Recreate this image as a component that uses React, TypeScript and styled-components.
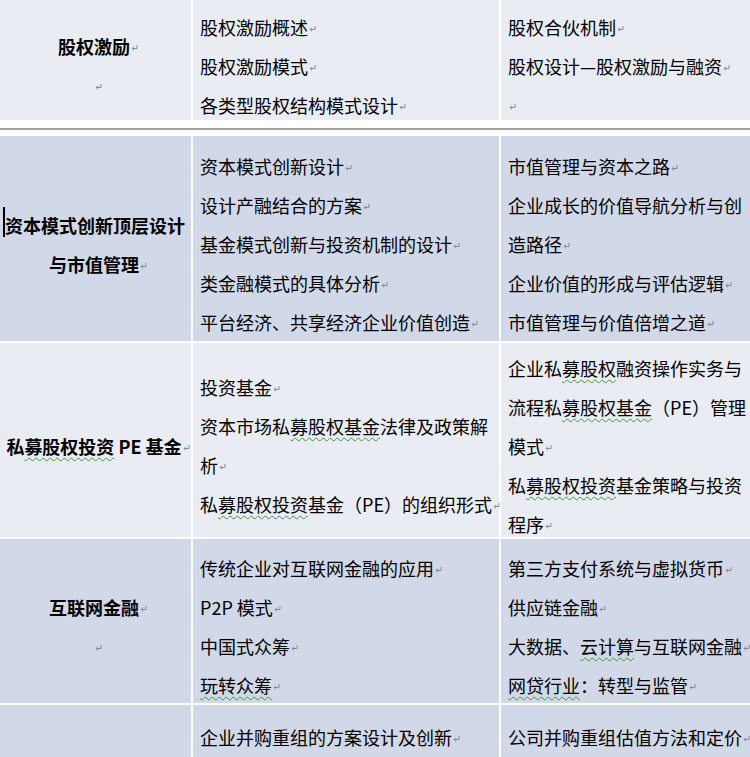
import React from "react";
import styled, { createGlobalStyle } from "styled-components";

const GlobalStyle = createGlobalStyle`
  html, body { margin: 0; padding: 0; background: #ffffff; overflow: hidden; }
  body { font-family: "Noto Sans CJK SC", "Noto Sans", sans-serif; }
`;

type Tone = "light" | "dark";
const toneBg: Record<Tone, string> = { light: "#e9ecf2", dark: "#d1d8e7" };

const Page = styled.div`
  width: 750px;
  height: 757px;
  overflow: hidden;
  display: flex;
  flex-direction: column;
  background: #ffffff;
`;

const Table = styled.div`
  display: flex;
  flex-direction: column;
  gap: 2px;
  width: 780px;
  flex-shrink: 0;
`;

const Row = styled.div<{ $h: number }>`
  display: grid;
  grid-template-columns: 191px 306px 1fr;
  column-gap: 2px;
  height: ${(p) => p.$h}px;
  flex-shrink: 0;
`;

const Cell = styled.div<{ $tone: Tone; $head?: boolean }>`
  background: ${(p) => toneBg[p.$tone]};
  display: flex;
  flex-direction: column;
  justify-content: center;
  padding: ${(p) => (p.$head ? "12px 4px 0 1px" : "12px 4px 0 7px")};
  text-align: ${(p) => (p.$head ? "center" : "left")};
  min-height: 0;
  overflow: visible;
`;

const Para = styled.p<{ $head?: boolean }>`
  margin: 0;
  font-size: 18px;
  line-height: 39px;
  white-space: nowrap;
  color: #000000;
  font-weight: ${(p) => (p.$head ? 700 : 400)};
`;

const Wavy = styled.span`
  text-decoration-line: underline;
  text-decoration-style: wavy;
  text-decoration-color: #3a9a3a;
  text-decoration-thickness: 1px;
  text-underline-offset: 3px;
  text-decoration-skip-ink: none;
`;

const Caret = styled.span`
  display: inline-block;
  width: 2px;
  height: 30px;
  background: #000000;
  vertical-align: -4px;
`;

const MarkSvg = styled.svg`
  display: inline-block;
  width: 7px;
  height: 6px;
  margin-left: 1px;
  margin-right: -8px;
  vertical-align: 3px;
`;

const PageBreak = styled.div`
  flex-shrink: 0;
  padding: 8px 0 6px;
  background: #ffffff;
`;

const BreakRule = styled.div`
  height: 2px;
  background: #a0a0a0;
`;

const ParaMark: React.FC = () => (
  <MarkSvg viewBox="0 0 7 6" aria-hidden="true">
    <path d="M6 0 V3.5 H1.2" fill="none" stroke="#8a8a8a" strokeWidth="1" />
    <path d="M3 1.6 L1.1 3.5 L3 5.4" fill="none" stroke="#8a8a8a" strokeWidth="1" />
  </MarkSvg>
);

function renderLine(line: string, key: number): React.ReactNode {
  const out: React.ReactNode[] = [];
  let text = line;
  if (text.startsWith("^")) {
    out.push(<Caret key="caret" />);
    text = text.slice(1);
  }
  text.split("~").forEach((part, i) => {
    if (!part) return;
    out.push(i % 2 === 1 ? <Wavy key={i}>{part}</Wavy> : <React.Fragment key={i}>{part}</React.Fragment>);
  });
  return <React.Fragment key={key}>{out}</React.Fragment>;
}

const Paragraph: React.FC<{ text: string; head?: boolean; mark?: boolean }> = ({ text, head, mark = true }) => {
  const lines = text.split("|");
  return (
    <Para $head={head}>
      {lines.map((l, i) => (
        <React.Fragment key={i}>
          {i > 0 && <br />}
          {renderLine(l, i)}
        </React.Fragment>
      ))}
      {mark && <ParaMark />}
    </Para>
  );
};

type RowData = {
  tone: Tone;
  h: number;
  head: string[];
  c2: string[];
  c3: string[];
  noHeadMark?: boolean;
};

const firstRow: RowData = {
  tone: "light",
  h: 120,
  head: ["股权激励", ""],
  c2: ["股权激励概述", "股权激励模式", "各类型股权结构模式设计"],
  c3: ["股权合伙机制", "股权设计—股权激励与融资", ""],
};

const rows: RowData[] = [
  {
    tone: "dark",
    h: 205,
    head: ["^资本模式创新顶层设计|与市值管理"],
    c2: [
      "资本模式创新设计",
      "设计产融结合的方案",
      "基金模式创新与投资机制的设计",
      "类金融模式的具体分析",
      "平台经济、共享经济企业价值创造",
    ],
    c3: [
      "市值管理与资本之路",
      "企业成长的价值导航分析与创|造路径",
      "企业价值的形成与评估逻辑",
      "市值管理与价值倍增之道",
    ],
  },
  {
    tone: "light",
    h: 194,
    head: ["私~募股权投资~ PE 基金"],
    c2: ["投资基金", "资本市场私~募股权基金~法律及政策解|析", "私~募股权投资~基金（PE）的组织形式"],
    c3: ["企业私~募股权~融资操作实务与|流程私~募股权基金~（PE）管理|模式", "私~募股权投资~基金策略与投资|程序"],
  },
  {
    tone: "dark",
    h: 164,
    head: ["互联网金融", ""],
    c2: ["传统企业对互联网金融的应用", "P2P 模式", "中国式众筹", "~玩转众筹~"],
    c3: ["第三方支付系统与虚拟货币", "供应链金融", "大数据、~云计算~与互联网金融", "~网贷行业~：转型与监管"],
  },
  {
    tone: "dark",
    h: 52,
    head: [],
    c2: ["企业并购重组的方案设计及创新"],
    c3: ["公司并购重组估值方法和定价"],
  },
];

const TableRow: React.FC<{ data: RowData }> = ({ data }) => (
  <Row $h={data.h}>
    <Cell $tone={data.tone} $head>
      {data.head.map((t, i) => (
        <Paragraph key={i} text={t} head />
      ))}
    </Cell>
    <Cell $tone={data.tone}>
      {data.c2.map((t, i) => (
        <Paragraph key={i} text={t} />
      ))}
    </Cell>
    <Cell $tone={data.tone}>
      {data.c3.map((t, i) => (
        <Paragraph key={i} text={t} />
      ))}
    </Cell>
  </Row>
);

export default function App() {
  return (
    <>
      <GlobalStyle />
      <Page>
        <Table>
          <TableRow data={firstRow} />
        </Table>
        <PageBreak>
          <BreakRule />
        </PageBreak>
        <Table>
          {rows.map((r, i) => (
            <TableRow key={i} data={r} />
          ))}
        </Table>
      </Page>
    </>
  );
}
